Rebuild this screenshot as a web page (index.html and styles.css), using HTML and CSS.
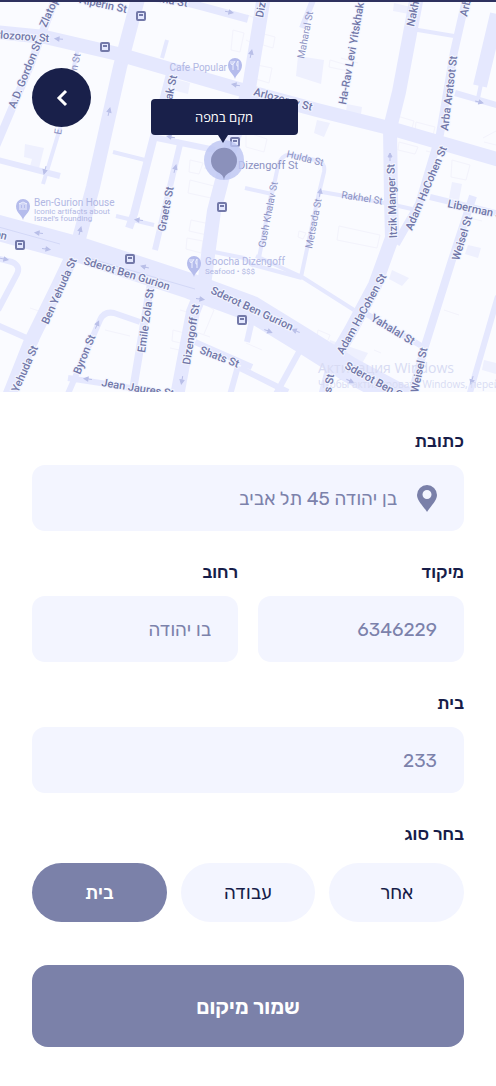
FILE: index.html
```html
<!DOCTYPE html>
<html lang="he" dir="rtl">
<head>
<meta charset="utf-8">
<meta name="viewport" content="width=device-width, initial-scale=1">
<title>מיקום</title>
<link rel="stylesheet" href="styles.css">
</head>
<body>
<main class="page">
  <section class="map" dir="ltr">
    <svg class="map-canvas" viewBox="0 0 496 392" preserveAspectRatio="xMidYMid slice" aria-hidden="true">
      <defs>
        <g id="arrow"><path d="M-4 0H3M0-2L4 0L0 2Z"/></g>
        <g id="stop"><rect x="-4" y="-4" width="8" height="8" rx="1"/><path d="M-2-1H2"/></g>
        <g id="poi"><path d="M0 12C-1 7-7 5-7-2A7 7 0 0 1 7-2C7 5 1 7 0 12Z"/></g>
        <g id="fork"><path d="M-2-6V3M-4-6V-3Q-2-1 0-6M3 3V-6Q1-4 2-1H3"/></g>
      </defs>
      <g class="blocks">
        <path d="M298 56L324 60L321 84L296 76Z"/>
        <path d="M25 144L44 148L38 172L29 170L32 159L24 157Z"/>
        <path d="M172 78L190 83L188 94L172 90Z"/>
        <path d="M317 120L330 123L324 137L314 133Z"/>
        <path d="M392 270L409 278L402 286L389 279Z"/>
        <path d="M468 245L481 248L478 258L465 254Z"/>
        <path d="M452 182L462 184L459 200L449 198Z"/>
        <path d="M330 340L368 353L360 367L326 356Z"/>
        <path d="M347 104L362 107L361 114L346 112Z"/>
        <path d="M394 3L411 7L409 14L393 11Z"/>
        <path d="M484 360L496 363V374L482 370Z"/>
      </g>
      <g class="outlines">
        <path d="M233 30L244 33L240 52L231 50ZM264 34L275 37L273 48L263 45ZM257 65L272 68L269 83L256 79ZM341 58L358 63M330 60L350 66L348 71L329 67ZM339 226L380 235L377 248L337 240ZM299 231L306 233L303 239L298 237Z"/>
        <path d="M204 168L216 171M190 180L214 186L211 198L188 193ZM191 220L210 224L207 235L189 231ZM187 238L203 241L201 253L186 249ZM190 160L203 163L199 174L189 172ZM180 310L194 314M173 330L188 334L185 344L172 341ZM170 348L184 351M208 306L214 310L204 334M196 332L210 337"/>
        <path d="M246 132L267 139L264 152L246 147ZM249 165L261 168M397 116L414 121L412 128L396 124ZM416 122L435 127L433 135L415 131ZM399 142L418 147L415 154L398 150ZM426 151L439 154M484 142L496 145M483 138L496 131M452 160L470 165L466 180L451 177ZM247 15L260 20M246 40L256 45"/>
        <path d="M318 330L330 335L325 347L316 343ZM352 360L382 372M444 310L459 315M374 350L381 353M246 343L262 350M470 218L482 221M30 308L42 312M105 330L130 336M256 112L268 115M207 128L214 130"/>
      </g>
      <g class="roads">
        <path class="w4" d="M78 48L61 125L43 184M113 152L145 160M116 216L154 225M245 188L272 194M250 264L302 278M412 29L454 36M485 65L477 103M385 203L412 209"/>
        <path class="w4" d="M272 194L278 166Q282 153 292 155L315 160Q326 162 324 172L319 193L301 277M272 190L259 258M322 192L385 203M256 256L302 277L354 310M167 40L162 58M214 252L244 258L254 266"/>
        <path class="w6" d="M-4 258L12 262Q21 266 17 274L-2 310M-3 325L38 343M455 93L500 106M430 197L500 214M363 312L425 348M195 342L252 367M238 366L230 395M140 322L114 313Q104 311 100 320L67 396M68 378L120 386L175 397M240 368L288 392M299 352L276 394M498 296L469 396M152 137L215 150M181 140L155 250M313 0L302 28M-2 160L60 176M252 320L247 342"/>
        <path class="w8" d="M57-6L30 66L-6 151M170 74L134 214L129 228M155 262L148 300L132 396M142-9L200 6L248 19M467-5L454 52L440 134L419 204L396 244M473 196L452 260L425 346L411 396M331 362L322 396"/>
        <path class="w14" d="M139-5L120 67L93 187L77 246L58 286L30 343L9 396M264-4L249 88L228 157L214 211L204 285L193 312L177 396M417-4L399 92L390 128L391 199L392 238L375 285L351 330L330 366M497 14L480 86"/>
        <path class="w14" d="M-5 32L45 37L118 54L235 88L317 110L393 129L500 160"/>
        <path class="avenue" d="M-5 227L80 250L190 286L252 309L304 341L350 370L404 399"/>
        <path class="median" d="M-5 226L60 244M88 258L195 289"/>
      </g>
      <g class="arrows">
        <use href="#arrow" transform="translate(59 39) rotate(185)"/><use href="#arrow" transform="translate(229 12) rotate(12)"/>
        <use href="#arrow" transform="translate(109 112) rotate(-76)"/><use href="#arrow" transform="translate(45 170) rotate(105)"/>
        <use href="#arrow" transform="translate(236 85) rotate(190)"/><use href="#arrow" transform="translate(251 54) rotate(-78)"/>
        <use href="#arrow" transform="translate(171 137) rotate(190)"/><use href="#arrow" transform="translate(175 169) rotate(-75)"/>
        <use href="#arrow" transform="translate(39 233) rotate(187)"/><use href="#arrow" transform="translate(46 249) rotate(8)"/>
        <use href="#arrow" transform="translate(80 231) rotate(-75)"/><use href="#arrow" transform="translate(139 220) rotate(187)"/>
        <use href="#arrow" transform="translate(145 267) rotate(195)"/><use href="#arrow" transform="translate(200 299) rotate(8)"/>
        <use href="#arrow" transform="translate(97 325) rotate(-66)"/><use href="#arrow" transform="translate(4 259) rotate(12)"/>
        <use href="#arrow" transform="translate(182 380) rotate(100)"/><use href="#arrow" transform="translate(88 379) rotate(187)"/>
        <use href="#arrow" transform="translate(268 331) rotate(22)"/><use href="#arrow" transform="translate(296 331) rotate(202)"/>
        <use href="#arrow" transform="translate(350 381) rotate(25)"/><use href="#arrow" transform="translate(472 380) rotate(106)"/>
        <use href="#arrow" transform="translate(390 157) rotate(-90)"/><use href="#arrow" transform="translate(320 193) rotate(-80)"/>
        <use href="#arrow" transform="translate(479 102) rotate(15)"/>
      </g>
      <g class="stops">
        <use href="#stop" x="141" y="16"/><use href="#stop" x="105" y="47"/><use href="#stop" x="235" y="142"/><use href="#stop" x="222" y="207"/>
        <use href="#stop" x="20" y="245"/><use href="#stop" x="130" y="259"/><use href="#stop" x="242" y="320"/>
      </g>
      <g class="pois">
        <use href="#poi" x="235" y="67"/><use href="#poi" x="23" y="208"/><use href="#poi" x="194" y="265"/>
      </g>
      <g class="poi-marks">
        <use href="#fork" x="235" y="67"/><use href="#fork" x="194" y="265"/>
        <path d="M19 204L23 202L27 204ZM20 205V208M23 205V208M26 205V208M19 209H27"/>
      </g>
      <g class="notice">
        <text class="notice-title" x="318" y="373">Активация Windows</text>
        <text x="318" y="388">Чтобы активировать Windows, перейдите</text>
      </g>
      <g class="streets">
        <text transform="translate(15 109) rotate(-68)">A.D. Gordon St</text>
        <text transform="translate(46 28) rotate(-66)">Zlatopolski St</text>
        <text class="end" transform="translate(126 13) rotate(12)">Alperin St</text>
        <text class="end" transform="translate(187 7) rotate(10)">Simma St</text>
        <text class="end" transform="translate(49 42) rotate(4)">Arlozorov St</text>
        <text transform="translate(172 100) rotate(-78)">ak St</text>
        <text transform="translate(263 18) rotate(-80)">Dizengoff St</text>
        <text transform="translate(346 105) rotate(-80)">Ha-Rav Levi Yitskhak St</text>
        <text transform="translate(414 27) rotate(-78)">Nakhmani St</text>
        <text transform="translate(467 17) rotate(-77)">Arba Aratsot St</text>
        <text transform="translate(448 131) rotate(-83)">Arba Aratsot St</text>
        <text transform="translate(253 95) rotate(15)">Arlozorov St</text>
        <text transform="translate(397 238) rotate(-92)">Itzik Manger St</text>
        <text transform="translate(412 231) rotate(-67)">Adam HaCohen St</text>
        <text transform="translate(343 355) rotate(-61)">Adam HaCohen St</text>
        <text transform="translate(447 207) rotate(12)">Liberman St</text>
        <text transform="translate(459 261) rotate(-73)">Weisel St</text>
        <text transform="translate(418 393) rotate(-78)">Weisel St</text>
        <text transform="translate(370 320) rotate(31)">Yahalal St</text>
        <text transform="translate(210 293) rotate(25)">Sderot Ben Gurion</text>
        <text transform="translate(83 264) rotate(17)">Sderot Ben Gurion</text>
        <text transform="translate(344 368) rotate(29)">Sderot Ben Gurion</text>
        <text transform="translate(331 393) rotate(-80)">s St</text>
        <text transform="translate(165 232) rotate(-79)">Graets St</text>
        <text transform="translate(145 353) rotate(-82)">Emile Zola St</text>
        <text transform="translate(190 365) rotate(-81)">Dizengoff St</text>
        <text transform="translate(48 325) rotate(-66)">Ben Yehuda St</text>
        <text transform="translate(18 393) rotate(-66)">Yehuda St</text>
        <text transform="translate(80 375) rotate(-68)">Byron St</text>
        <text transform="translate(101 386) rotate(9)">Jean Jaures St</text>
        <text transform="translate(199 353) rotate(21)">Shats St</text>
        <text class="end" transform="translate(6 240) rotate(14)">Gurion</text>
      </g>
      <g class="lanes">
        <text transform="translate(61 135) rotate(-80)">E</text>
        <text transform="translate(77 71) rotate(-78)">n St</text>
        <text transform="translate(304 59) rotate(-79)">Maharal St</text>
        <text transform="translate(286 157) rotate(14)">Hulda St</text>
        <text transform="translate(341 198) rotate(9)">Rakhel St</text>
        <text transform="translate(312 249) rotate(-79)">Metsada St</text>
        <text transform="translate(265 248) rotate(-79)">Gush Khalav St</text>
        <text class="wide" x="238" y="169">Dizengoff St</text>
      </g>
      <g class="places">
        <text class="end" x="227" y="71">Cafe Popular</text>
        <text x="34" y="206">Ben-Gurion House</text>
        <text class="note" x="34" y="214">Iconic artifacts about</text>
        <text class="note" x="34" y="221">Israel's founding</text>
        <text x="205" y="265">Goocha Dizengoff</text>
        <text class="note" x="205" y="274">Seafood • $$$</text>
      </g>
    </svg>
    <button class="back" type="button" aria-label="חזרה">
      <svg width="12" height="18" viewBox="0 0 12 18" aria-hidden="true"><path d="M10 2L3 9L10 16"/></svg>
    </button>
    <div class="marker">
      <button class="tooltip" type="button" dir="rtl">מקם במפה</button>
      <svg class="pin" width="40" height="46" viewBox="0 0 40 46" aria-hidden="true">
        <circle class="pin-halo" cx="20" cy="25" r="20"/>
        <path class="pin-body" d="M20 45C19 39 16 39 12 36A13 13 0 1 1 28 36C24 39 21 39 20 45Z"/>
        <path class="pin-tip" d="M14 0H24L19 8Z"/>
      </svg>
    </div>
  </section>

  <form class="form">
    <div class="field">
      <label for="address">כתובת</label>
      <div class="box">
        <svg class="box-icon" width="20" height="27" viewBox="0 0 20 27" aria-hidden="true"><path fill-rule="evenodd" d="M10 27C8 23 0 16 0 10A10 10 0 0 1 20 10C20 16 12 23 10 27ZM10 5A4.500 4.500 0 1 0 10 14A4.500 4.500 0 1 0 10 5Z"/></svg>
        <input id="address" type="text" value="בן יהודה 45 תל אביב">
      </div>
    </div>
    <div class="pair">
      <div class="field">
        <label for="zip">מיקוד</label>
        <div class="box"><input id="zip" type="text" inputmode="numeric" value="6346229"></div>
      </div>
      <div class="field">
        <label for="street">רחוב</label>
        <div class="box"><input id="street" type="text" value="בו יהודה"></div>
      </div>
    </div>
    <div class="field">
      <label for="house">בית</label>
      <div class="box"><input id="house" type="text" inputmode="numeric" value="233"></div>
    </div>
    <fieldset class="kinds">
      <legend>בחר סוג</legend>
      <div class="options">
        <label class="option"><input type="radio" name="kind"><span>אחר</span></label>
        <label class="option"><input type="radio" name="kind"><span>עבודה</span></label>
        <label class="option"><input type="radio" name="kind" checked><span>בית</span></label>
      </div>
    </fieldset>
    <button class="save" type="submit">שמור מיקום</button>
  </form>
</main>
</body>
</html>
```
FILE: styles.css
```css
* { box-sizing: border-box; }

body {
  margin: 0;
  background: #fff;
  color: #171d49;
  font-family: Rubik, "Open Sans", "Noto Sans", "DejaVu Sans", sans-serif;
}

button, input { font: inherit; }

.map {
  position: relative;
  border-top: 2px solid #2e315f;
  background: #fafbff;
  overflow: hidden;
}

.map-canvas {
  display: block;
  width: 100%;
  margin-top: -2px;
  font-family: Roboto, sans-serif;
}

.blocks { fill: #eef0fe; }
.outlines { fill: none; stroke: #f3f3fc; stroke-width: 1; }
.roads { fill: none; stroke: #e5e8fe; stroke-linejoin: round; }
.w4 { stroke-width: 4; }
.w6 { stroke-width: 6; }
.w8 { stroke-width: 8; }
.w14 { stroke-width: 14; }
.avenue { stroke-width: 26; }
.roads .median { stroke: #d3d8f7; stroke-width: 1; }
.arrows { fill: #b9bfe8; stroke: #b9bfe8; stroke-width: 1; }
.stops { fill: #e4e8fe; stroke: #7379a9; stroke-width: 2; }
.pois { fill: #b5bcec; }
.poi-marks { fill: none; stroke: #eef0ff; stroke-width: 1; }

.streets {
  fill: #7177a8;
  stroke: #f3f5ff;
  stroke-width: 2;
  paint-order: stroke;
  font-size: 11px;
  font-weight: 500;
}
.end { text-anchor: end; }
.lanes { fill: #8c92c2; font-size: 10px; }
.lanes .wide { font-size: 11px; }
.places { fill: #b1b7e3; font-size: 10px; }
.places .note { font-size: 8px; }
.notice { fill: #d8dbf3; font-family: "Open Sans", sans-serif; font-size: 10px; }
.notice .notice-title { font-size: 14px; }

.back {
  position: absolute;
  top: 66px;
  left: 32px;
  display: grid;
  place-items: center;
  width: 59px;
  height: 59px;
  padding: 0;
  border: 0;
  border-radius: 50%;
  background: #19204a;
}
.back path { fill: none; stroke: #fff; stroke-width: 3; }

.marker {
  position: absolute;
  top: 97px;
  left: 0;
  right: 0;
  display: flex;
  flex-direction: column;
  align-items: center;
  margin-right: 48px;
}

.tooltip {
  width: 147px;
  height: 36px;
  padding: 0;
  border: 0;
  border-radius: 4px;
  background: #19204a;
  color: #fff;
  font-family: "Open Sans", "Noto Sans", sans-serif;
  font-size: 13px;
}
.pin-tip { fill: #19204a; }
.pin-halo { fill: #bdc5f3; opacity: 0.8; }
.pin-body { fill: #8b91bb; }

.form {
  display: flex;
  flex-direction: column;
  gap: 29px;
  padding: 37px 32px 39px;
}

.field {
  display: flex;
  flex: 1;
  flex-direction: column;
  gap: 12px;
  min-width: 0;
}

.field label, .kinds legend {
  font-size: 18px;
  font-weight: 500;
  line-height: 24px;
}

.pair { display: flex; gap: 20px; }

.box {
  display: flex;
  align-items: center;
  gap: 20px;
  height: 66px;
  padding: 0 27px;
  border-radius: 13px;
  background: #f3f5ff;
}
.box-icon { flex: none; fill: #7a80a9; }

.box input {
  width: 100%;
  min-width: 0;
  height: 100%;
  padding: 0;
  border: 0;
  outline: 0;
  background: none;
  color: #7c82ab;
  font-size: 19px;
}

.kinds { min-width: 0; margin: 0; padding: 0; border: 0; }
.kinds legend { padding: 0; }

.options {
  display: flex;
  gap: 14px;
  padding: 17px 0 14px;
}

.option {
  position: relative;
  display: grid;
  flex: 1;
  place-items: center;
  height: 59px;
  border-radius: 30px;
  background: #f3f5ff;
  font-size: 19px;
}
.option:has(input:checked) {
  background: #7b81a9;
  color: #fff;
  font-weight: 500;
}
.option input {
  position: absolute;
  inset: 0;
  width: 100%;
  height: 100%;
  margin: 0;
  opacity: 0;
}

.save {
  height: 82px;
  border: 0;
  border-radius: 16px;
  background: #7b81a9;
  color: #fff;
  font-size: 21px;
  font-weight: 600;
}
```
